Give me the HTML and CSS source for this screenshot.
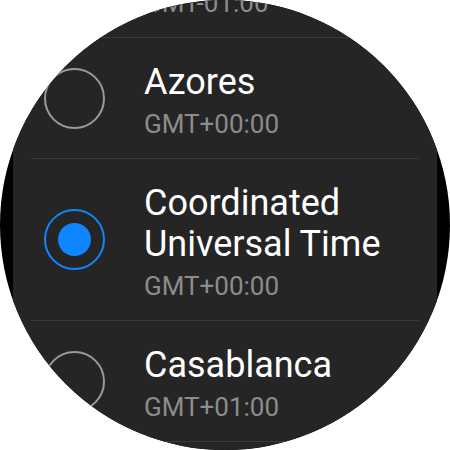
FILE: index.html
```html
<!DOCTYPE html>
<html lang="en">
<head>
    <meta charset="UTF-8">
    <meta name="viewport" content="width=device-width, initial-scale=1.0">
    <title>Time zone</title>
    <link rel="stylesheet" href="styles.css">
</head>
<body>
    <div class="watch">
        <div class="list">
            <div class="row">
                <span class="radio"></span>
                <div class="label">
                    <div class="title">Cape Verde</div>
                    <div class="sub">GMT-01:00</div>
                </div>
            </div>
            <div class="row">
                <span class="radio"></span>
                <div class="label">
                    <div class="title">Azores</div>
                    <div class="sub">GMT+00:00</div>
                </div>
            </div>
            <div class="row">
                <span class="radio checked"></span>
                <div class="label">
                    <div class="title">Coordinated<br>Universal Time</div>
                    <div class="sub">GMT+00:00</div>
                </div>
            </div>
            <div class="row">
                <span class="radio"></span>
                <div class="label">
                    <div class="title">Casablanca</div>
                    <div class="sub">GMT+01:00</div>
                </div>
            </div>
            <div class="row">
                <span class="radio"></span>
                <div class="label">
                    <div class="title">Dublin</div>
                    <div class="sub">GMT+01:00</div>
                </div>
            </div>
        </div>
    </div>
</body>
</html>
```

FILE: styles.css
```css
body {
    margin: 0;
    padding: 0;
    background-color: #fff;
    font-family: Roboto, "Noto Sans", sans-serif;
}

.watch {
    width: 450px;
    height: 450px;
    border-radius: 50%;
    overflow: hidden;
    background-color: #000;
}

.list {
    margin: -83px 13px 0;
    background-color: #252525;
    height: 600px;
}

.row {
    display: flex;
    align-items: center;
    margin: 0 18px;
    border-bottom: 1px solid #3a3a3a;
}

.radio {
    flex-shrink: 0;
    width: 61px;
    height: 61px;
    box-sizing: border-box;
    margin: 0 39px 0 13px;
    border: 2px solid #9a9a9a;
    border-radius: 50%;
    display: flex;
    align-items: center;
    justify-content: center;
}

.radio.checked {
    border-color: #0f86ff;
}

.radio.checked::after {
    content: "";
    width: 33px;
    height: 33px;
    border-radius: 50%;
    background-color: #0f86ff;
}

.label {
    padding: 24px 0 19px;
}

.title {
    color: #fff;
    font-size: 36px;
    line-height: 41px;
}

.sub {
    color: #8c8c8c;
    font-size: 26px;
    line-height: 30px;
    margin-top: 6px;
}
```
